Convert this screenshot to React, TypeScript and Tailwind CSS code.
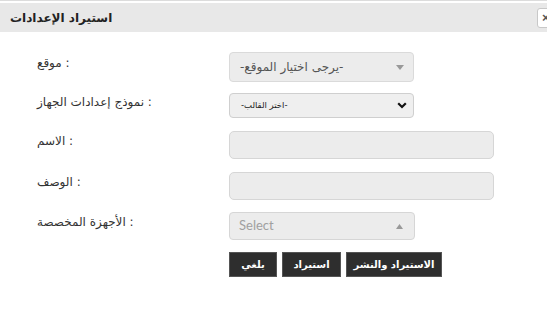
import React from 'react';

const ar = { fontFamily: '"DejaVu Sans", sans-serif' };

function Label({ text }: { text: string }) {
    return (
        <div className="w-[192px] pb-[8px] text-[12px] text-[#333]" style={ar} dir="ltr">
            {text} :
        </div>
    );
}

export default function App() {
    return (
        <div className="w-[547px] h-[312px] bg-white overflow-hidden border-t border-[#dcdcdc]">
            <div className="mt-[2px] h-[29px] bg-[#e8e8e8] flex items-center pl-[10px]">
                <h1 className="text-[12px] font-bold text-[#222]" style={ar} dir="rtl">استيراد الإعدادات</h1>
                <div className="ml-auto mr-[-12px] w-[22px] h-[20px] bg-white border border-[#c8c8c8] rounded-[3px] flex items-center pl-[4px]">
                    <span className="text-[13px] font-bold text-[#555] leading-none" style={{ fontFamily: 'Arial, "Liberation Sans", sans-serif' }}>×</span>
                </div>
            </div>

            <div className="pl-[37px] pt-[20px] flex flex-col">
                <div className="flex items-center h-[30px]">
                    <Label text="موقع" />
                    <div className="w-[185px] h-[30px] bg-[#ececec] border border-[#dadada] rounded-[4px] flex items-center justify-between pl-[10px] pr-[9px]">
                        <span className="text-[12px] text-[#555]" style={ar} dir="rtl">-يرجى اختيار الموقع-</span>
                        <svg width="8" height="5" viewBox="0 0 8 5"><path d="M0 0h8L4 5z" fill="#999" /></svg>
                    </div>
                </div>

                <div className="flex items-center h-[25px] mt-[11px]">
                    <Label text="نموذج إعدادات الجهاز" />
                    <div className="w-[185px] h-[25px] bg-[#efefef] border border-[#cfcfcf] rounded-[4px] flex items-center justify-between pl-[11px] pr-[6px]">
                        <span className="text-[8.5px] text-[#222]" style={ar} dir="rtl">-اختر القالب-</span>
                        <svg width="10" height="7" viewBox="0 0 10 7"><path d="M1.2 1.2L5 5l3.8-3.8" stroke="#111" strokeWidth="2.2" fill="none" /></svg>
                    </div>
                </div>

                <div className="flex items-center h-[28px] mt-[13px]">
                    <Label text="الاسم" />
                    <div className="w-[265px] h-[28px] bg-[#ececec] border border-[#d6d6d6] rounded-[5px]" />
                </div>

                <div className="flex items-center h-[28px] mt-[13px]">
                    <Label text="الوصف" />
                    <div className="w-[265px] h-[28px] bg-[#ececec] border border-[#d6d6d6] rounded-[5px]" />
                </div>

                <div className="flex items-center h-[28px] mt-[12px]">
                    <Label text="الأجهزة المخصصة" />
                    <div className="w-[186px] h-[28px] bg-[#ececec] border border-[#d6d6d6] rounded-[4px] flex items-center justify-between pl-[9px] pr-[11px]">
                        <span className="text-[13px] text-[#a0a0a0]" style={{ fontFamily: 'Lato, sans-serif' }}>Select</span>
                        <svg width="7" height="5" viewBox="0 0 7 5"><path d="M0 5h7L3.5 0z" fill="#999" /></svg>
                    </div>
                </div>

                <div className="flex items-center gap-[5px] mt-[12px] ml-[192px]">
                    <button className="w-[48px] h-[25px] bg-[#2e2e2e] border border-[#555] text-white text-[10px] font-bold" style={ar}>يلغي</button>
                    <button className="w-[59px] h-[25px] bg-[#2e2e2e] border border-[#555] text-white text-[10px] font-bold" style={ar}>استيراد</button>
                    <button className="w-[96px] h-[25px] bg-[#2e2e2e] border border-[#555] text-white text-[10px] font-bold" style={ar}>الاستيراد والنشر</button>
                </div>
            </div>
        </div>
    );
}
